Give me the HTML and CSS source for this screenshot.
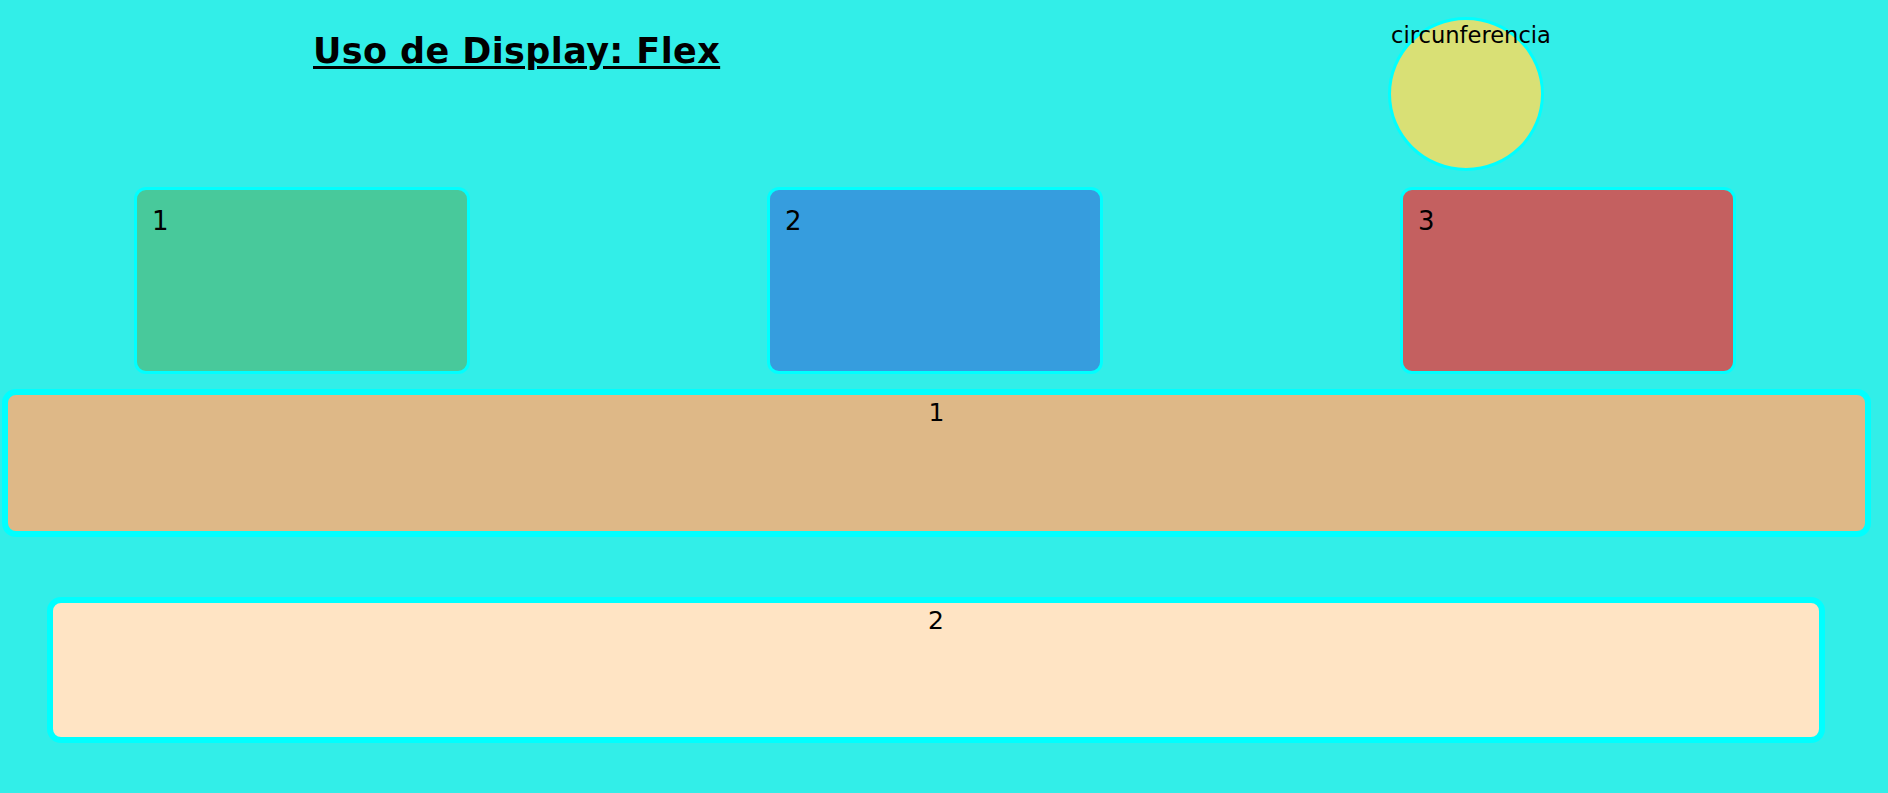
FILE: index.html
```html
<!DOCTYPE html>
<html lang="es">
<head>
<meta charset="utf-8">
<title>Uso de Display: Flex</title>
<link rel="stylesheet" href="styles.css">
</head>
<body>
  <header class="header">
    <h1 class="title">Uso de Display: Flex</h1>
    <div class="circle">circunferencia</div>
  </header>
  <section class="row">
    <div class="box box-green">1</div>
    <div class="box box-blue">2</div>
    <div class="box box-red">3</div>
  </section>
  <div class="bar bar-one">1</div>
  <div class="bar bar-two">2</div>
</body>
</html>
```

FILE: styles.css
```css
html, body {
  margin: 0;
  padding: 0;
}

body {
  background: #32eee8;
  font-family: "Comic Sans MS", "DejaVu Sans", sans-serif;
  color: #000;
  overflow: hidden;
  height: 793px;
}

.header {
  display: flex;
  align-items: flex-start;
  padding: 17px 344px 0 313px;
}

.title {
  margin: 14px 0 0 0;
  font-family: "DejaVu Sans", Verdana, sans-serif;
  font-weight: bold;
  font-size: 35px;
  line-height: 41px;
  letter-spacing: 0.4px;
  text-decoration: underline;
  text-decoration-thickness: 3px;
  text-underline-offset: 3px;
}

.circle {
  margin-left: auto;
  box-sizing: border-box;
  width: 156px;
  height: 154px;
  border: 3px solid #00ffff;
  border-radius: 50%;
  background: #d9e075;
  font-size: 22.6px;
  line-height: 26px;
  padding-top: 2px;
  white-space: nowrap;
}

.row {
  display: flex;
  gap: 297px;
  padding-left: 134px;
  margin-top: 16px;
}

.box {
  box-sizing: border-box;
  width: 336px;
  height: 187px;
  border: 3px solid #00ffff;
  border-radius: 12px;
  padding: 16px 15px;
  font-size: 26px;
  line-height: 30px;
}

.box-green { background: #48c99b; }
.box-blue { background: #369dde; }
.box-red { background: #c46060; }

.bar {
  box-sizing: border-box;
  border: 6px solid #00ffff;
  border-radius: 14px;
  text-align: center;
  font-size: 25px;
  line-height: 29px;
  padding-top: 3px;
}

.bar-one {
  margin: 15px 17px 0 2px;
  height: 148px;
  background: #deb887;
}

.bar-two {
  margin: 60px 63px 0 47px;
  height: 146px;
  background: #ffe4c4;
}
```
